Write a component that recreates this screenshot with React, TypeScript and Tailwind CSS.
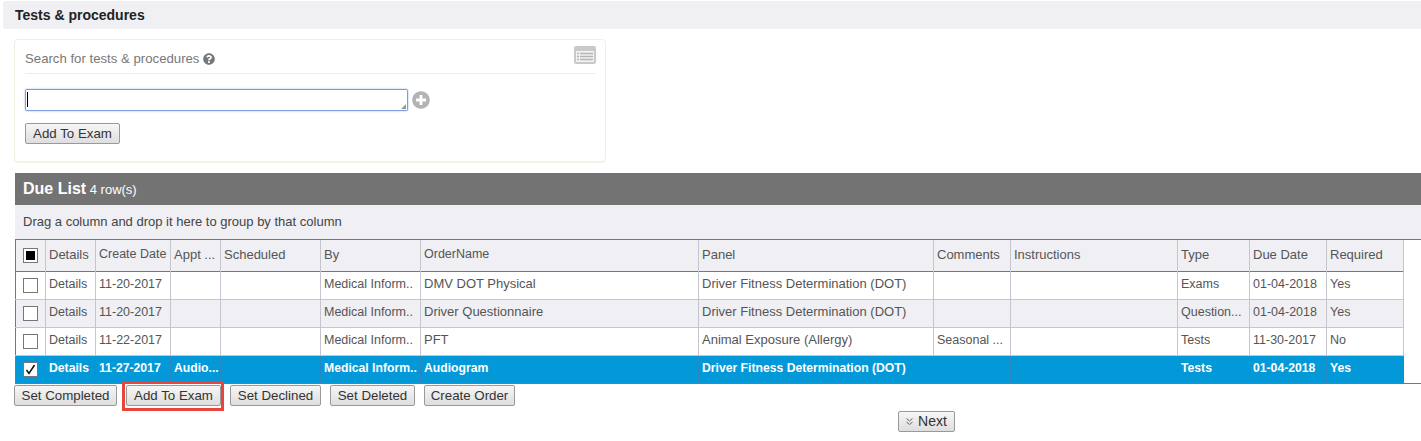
import { FaPlusCircle, FaQuestionCircle } from "react-icons/fa";

const columns = [
  { label: "", width: "w-[30px]" },
  { label: "Details", width: "w-[50px]" },
  { label: "Create Date", width: "w-[75px]" },
  { label: "Appt ...", width: "w-[50px]" },
  { label: "Scheduled", width: "w-[100px]" },
  { label: "By", width: "w-[100px]" },
  { label: "OrderName", width: "w-[278px]" },
  { label: "Panel", width: "w-[235px]" },
  { label: "Comments", width: "w-[77px]" },
  { label: "Instructions", width: "w-[167px]" },
  { label: "Type", width: "w-[72px]" },
  { label: "Due Date", width: "w-[77px]" },
  { label: "Required", width: "w-[77px]" },
];

const rows = [
  { cells: ["Details", "11-20-2017", "", "", "Medical Inform..", "DMV DOT Physical", "Driver Fitness Determination (DOT)", "", "", "Exams", "01-04-2018", "Yes"] },
  { cells: ["Details", "11-20-2017", "", "", "Medical Inform..", "Driver Questionnaire", "Driver Fitness Determination (DOT)", "", "", "Question...", "01-04-2018", "Yes"], alt: true },
  { cells: ["Details", "11-22-2017", "", "", "Medical Inform..", "PFT", "Animal Exposure (Allergy)", "Seasonal ...", "", "Tests", "11-30-2017", "No"] },
  { cells: ["Details", "11-27-2017", "Audio...", "", "Medical Inform..", "Audiogram", "Driver Fitness Determination (DOT)", "", "", "Tests", "01-04-2018", "Yes"], selected: true },
];

const btn =
  "h-[21px] border border-[#9a9a9a] rounded-[2px] bg-gradient-to-b from-[#f6f6f6] to-[#dedede] text-[13.3px] leading-[19px] text-center text-[#333] whitespace-nowrap";

function Checkbox({ state }: { state?: "partial" | "checked" }) {
  return (
    <span className="flex items-center justify-center w-[15px] h-[15px] mx-auto border border-[#777] bg-white">
      {state === "partial" && <span className="block w-[9px] h-[9px] bg-black" />}
      {state === "checked" && (
        <svg width="11" height="11" viewBox="0 0 11 11" fill="none">
          <path d="M1.5 6 L4 9.5 L9.5 1" stroke="#111" strokeWidth="1.5" />
        </svg>
      )}
    </span>
  );
}

export default function App() {
  return (
    <div className="w-[1421px] h-[441px] overflow-hidden bg-white font-['Liberation_Sans',Arial,sans-serif] text-[13px] text-[#555]">
      <div className="ml-[3px] mt-[1px] h-[28px] rounded-l-[3px] bg-[#efeff4] pl-[12px] text-[14px] leading-[28px] font-bold text-[#222]">
        Tests &amp; procedures
      </div>

      <div className="ml-[14px] mt-[10px] w-[592px] h-[123px] rounded-[4px] border border-[#f3eee2] shadow-[0_1px_1px_#f6f2e8] pl-[10px] pr-[9px]">
        <div className="flex justify-between h-[34px] border-b border-[#f3eee2]">
          <div className="flex items-center gap-[4px] h-[34px] pt-[3px] text-[13.2px] text-[#777]">
            Search for tests &amp; procedures
            <FaQuestionCircle className="text-[12px] text-[#777]" />
          </div>
          <svg width="22" height="18" viewBox="0 0 22 18" className="mt-[6px]">
            <rect x="0" y="0" width="22" height="18" rx="2" fill="#c9c9c9" />
            <rect x="2" y="5" width="18" height="11" fill="#f2f2f2" />
            <path d="M3 7.5h2M6 7.5h13M3 10.5h2M6 10.5h13M3 13.5h2M6 13.5h13" stroke="#b5b5b5" strokeWidth="1.3" />
          </svg>
        </div>

        <div className="flex items-center mt-[15px] gap-[4px]">
          <div className="relative w-[383px] h-[22px] rounded-[2px] border border-[#7f9fdc] border-t-[#8a9ab8] shadow-[0_0_2px_#8fb4f0]">
            <span className="absolute left-[1px] top-[2px] w-px h-[15px] bg-black" />
            <span className="absolute right-[1px] bottom-[1px] w-0 h-0 border-l-[5px] border-b-[5px] border-l-transparent border-b-[#999]" />
          </div>
          <FaPlusCircle className="text-[18px] text-[#b3b3b3]" />
        </div>

        <button className={`${btn} mt-[12px] block w-[95px]`}>Add To Exam</button>
      </div>

      <div className="ml-[15px] mt-[11px] h-[32px] bg-[#737373] pl-[8px] leading-[31px] text-white">
        <span className="text-[16px] font-bold">Due List</span> <span className="text-[13px]">4 row(s)</span>
      </div>
      <div className="ml-[15px] h-[35px] bg-[#efeff4] pl-[8px] leading-[33px] text-[13px] text-[#444] border-b border-[#777]">
        Drag a column and drop it here to group by that column
      </div>

      <div className="ml-[15px] border-b border-[#777]">
        <table className="table-fixed w-[1388px] border-collapse border-l border-l-[#777]">
          <colgroup>
            {columns.map((c, i) => (
              <col key={i} className={c.width} />
            ))}
          </colgroup>
          <thead>
            <tr className="h-[31px] bg-[#efeff4] border-b border-[#777]">
              {columns.map((c, i) => (
                <th
                  key={i}
                  className={`border-r border-[#c5c5d0] px-[3px] text-left font-normal truncate ${i === 0 ? "" : "pb-[2px]"} ${i === 2 || i === 6 ? "text-[12.5px]" : "text-[13px]"}`}
                >
                  {i === 0 ? <Checkbox state="partial" /> : c.label}
                </th>
              ))}
            </tr>
          </thead>
          <tbody>
            {rows.map((r, ri) => {
              const tone = r.selected
                ? "bg-[#0398d8] text-white font-bold"
                : r.alt
                  ? "bg-[#efeff4]"
                  : "bg-white";
              const line = r.selected ? "border-[#2a86c0]" : "border-[#c5c5d0]";
              return (
                <tr key={ri} className={`h-[28px] ${tone} ${r.selected ? "" : "border-b border-[#c5c5d0]"}`}>
                  <td className={`border-r ${line} px-[3px]`}>
                    <Checkbox state={r.selected ? "checked" : undefined} />
                  </td>
                  {r.cells.map((cell, ci) => {
                    // order name and panel read a little wider than the rest
                    const wide = ci === 5 || ci === 6;
                    const size = r.selected ? "text-[12.2px]" : wide ? "text-[13px]" : "text-[12.5px]";
                    return (
                      <td key={ci} className={`border-r ${line} px-[3px] pb-[2px] ${size} whitespace-nowrap overflow-hidden`}>
                        {cell}
                      </td>
                    );
                  })}
                </tr>
              );
            })}
          </tbody>
        </table>
      </div>

      <div className="flex items-start ml-[14px] mt-[1px] gap-[9px]">
        <button className={`${btn} w-[103px]`}>Set Completed</button>
        <div className="relative">
          <button className={`${btn} w-[95px] block`}>Add To Exam</button>
          <span className="absolute -left-[4px] -right-[3px] -top-[4px] -bottom-[5px] border-[3px] border-[#e8453c]" />
        </div>
        <button className={`${btn} w-[91px]`}>Set Declined</button>
        <button className={`${btn} w-[85px]`}>Set Deleted</button>
        <button className={`${btn} w-[91px]`}>Create Order</button>
      </div>

      <div className="flex justify-center mt-[5px] pl-[431px]">
        <button className={`${btn} w-[57px] flex items-center justify-center gap-[4px] text-[14px]`}>
          <svg width="9" height="9" viewBox="0 0 9 9" fill="none" stroke="#666" strokeWidth="1">
            <path d="M1.5 1.5 L4.5 4 L7.5 1.5M1.5 5 L4.5 7.5 L7.5 5" />
          </svg>
          Next
        </button>
      </div>
    </div>
  );
}
